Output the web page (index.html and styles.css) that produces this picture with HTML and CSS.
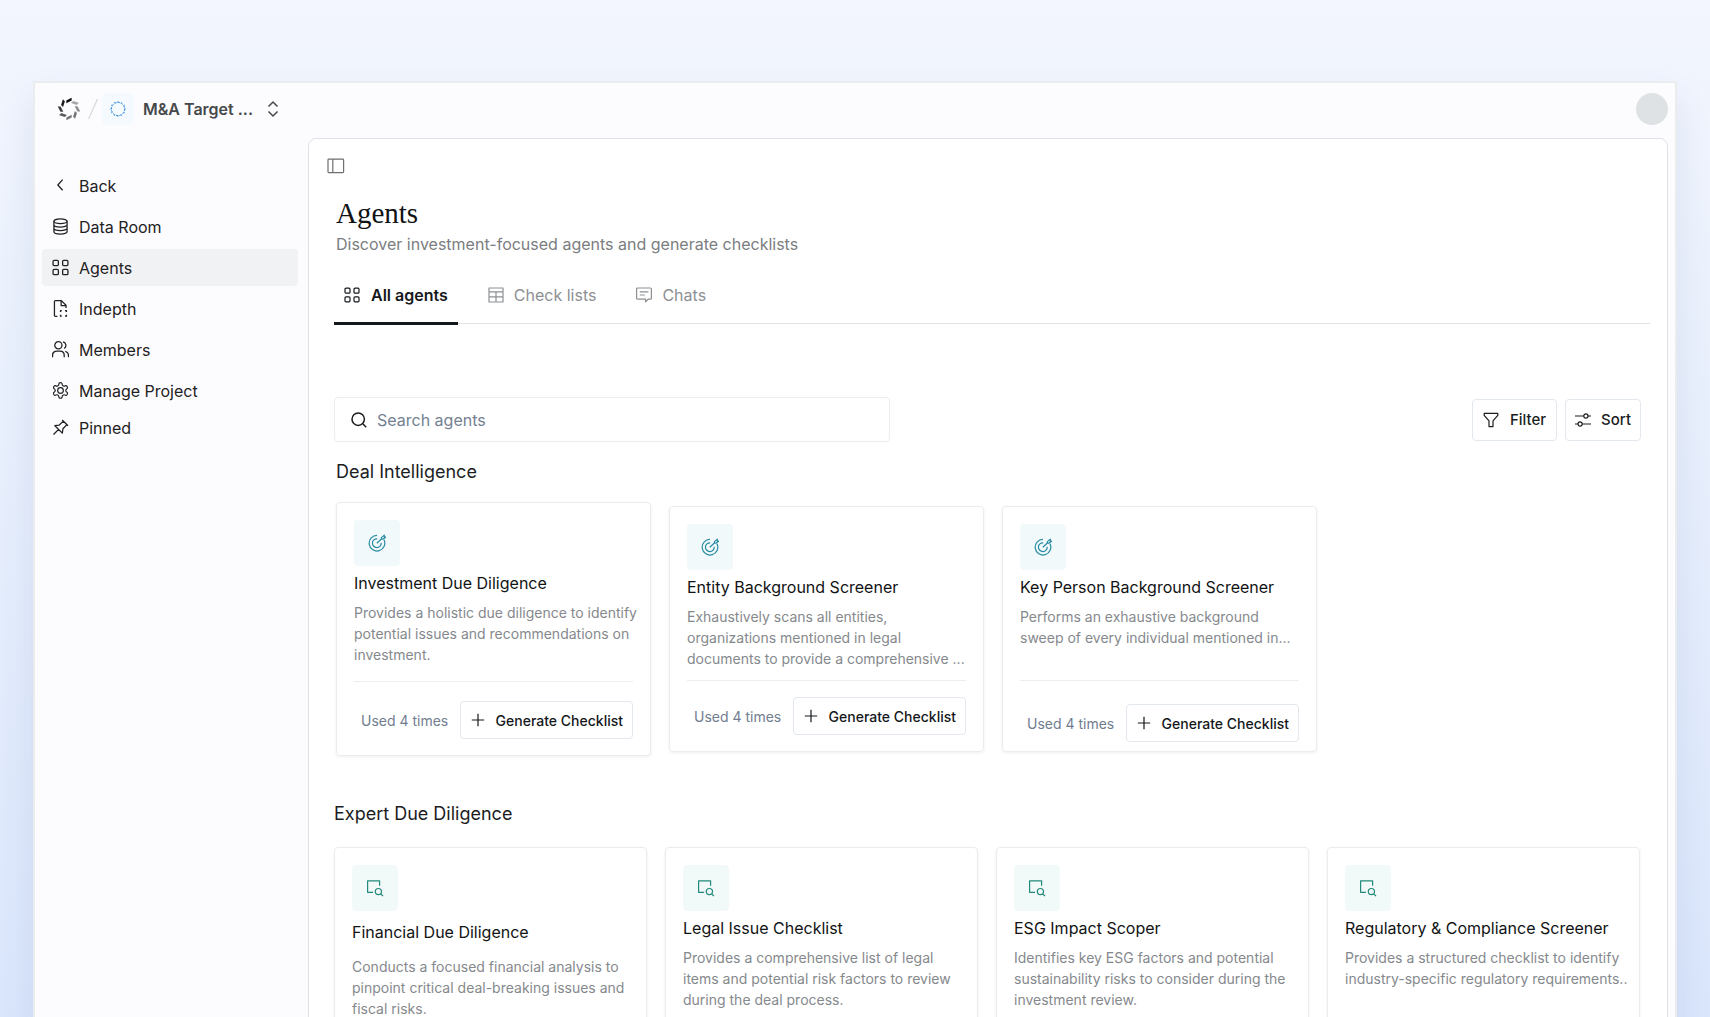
FILE: index.html
```html
<!DOCTYPE html>
<html lang="en">
<head>
    <meta charset="UTF-8">
    <meta name="viewport" content="width=device-width, initial-scale=1.0">
    <title>Agents</title>
    <link rel="stylesheet" href="styles.css">
</head>
<body>
    <!-- shared icons -->
    <svg class="sprite" aria-hidden="true">
        <symbol id="i-grid" viewBox="0 0 16 16"><rect x="1" y="1.2" width="5" height="5" rx="1"/><rect x="10" y="1.2" width="5" height="5" rx="1"/><rect x="1" y="9.8" width="5" height="5" rx="1"/><rect x="10" y="9.8" width="5" height="5" rx="1"/></symbol>
        <symbol id="i-target" viewBox="0 0 18 18"><path d="M9 1.400a7.800 7.800 0 1 0 7 4.400"/><path d="M9.200 4.800a4.400 4.400 0 1 0 4 4"/><path d="M8.800 9.300l4.600-4.300V3.600l2.900-2.500v2.100h1.300l-2.700 2h-1.300"/></symbol>
        <symbol id="i-review" viewBox="0 0 18 18"><path d="M7 13.3H1.6V1.8h12v5"/><circle cx="12.4" cy="12.6" r="3.1"/><path d="M14.8 15l2.2 2.2"/></symbol>
        <symbol id="i-plus" viewBox="0 0 14 14"><path d="M7 .8v12.4M.8 7h12.4"/></symbol>
        <symbol id="i-petal" viewBox="0 0 24 24"><path d="M9.300 6.300V3.500L14.600.7v2.900z"/></symbol>
    </svg>

    <div class="window">
        <header class="topbar">
            <svg class="logo" viewBox="0 0 24 24">
                <use href="#i-petal" fill="#0c0d0e"/>
                <use href="#i-petal" fill="#a5a7a9" transform="rotate(45 12 12)"/>
                <use href="#i-petal" fill="#8b8d90" transform="rotate(90 12 12)"/>
                <use href="#i-petal" fill="#717376" transform="rotate(135 12 12)"/>
                <use href="#i-petal" fill="#737578" transform="rotate(180 12 12)"/>
                <use href="#i-petal" fill="#5b5d60" transform="rotate(225 12 12)"/>
                <use href="#i-petal" fill="#3c3e41" transform="rotate(270 12 12)"/>
                <use href="#i-petal" fill="#1c1d1f" transform="rotate(315 12 12)"/>
            </svg>
            <svg class="slash" viewBox="0 0 12 24"><path d="M1.5 22L10.5 2"/></svg>
            <button class="project" type="button">
                <span class="project-icon">
                    <svg viewBox="0 0 16 16"><circle cx="8" cy="8" r="6.6"/><path d="M8 .2v1.600M11.900 1.200l-.8 1.400M14.800 4.100l-1.400.8M15.800 8h-1.600M14.800 11.900l-1.400-.8M11.900 14.800l-.8-1.400M8 15.800v-1.600M4.100 14.800l.8-1.400M1.200 11.900l1.400-.8M.2 8h1.600M1.200 4.100l1.400.8M4.100 1.200l.8 1.400"/></svg>
                </span>
                M&amp;A Target ...
                <svg class="chevrons" viewBox="0 0 12 16"><path d="M1.5 5.5L6 1l4.5 4.5M1.5 10.5L6 15l4.5-4.5"/></svg>
            </button>
            <span class="avatar"></span>
        </header>

        <nav class="sidebar">
            <a class="nav-item" href="#"><svg class="icon" viewBox="0 0 16 16"><path d="M10 2.5L5.5 7.5l4.5 5"/></svg>Back</a>
            <a class="nav-item" href="#"><svg class="icon" viewBox="0 0 16 16"><ellipse cx="8" cy="3" rx="6.2" ry="2.2"/><path d="M1.8 3v10c0 1.2 2.8 2.2 6.2 2.2s6.2-1 6.2-2.2V3M1.8 6.3c0 1.2 2.8 2.2 6.2 2.2s6.2-1 6.2-2.2M1.8 9.7c0 1.2 2.8 2.2 6.2 2.2s6.2-1 6.2-2.2"/></svg>Data Room</a>
            <a class="nav-item active" href="#"><svg class="icon"><use href="#i-grid"/></svg>Agents</a>
            <a class="nav-item" href="#"><svg class="icon" viewBox="0 0 16 16"><path d="M5 15.4H3.2a.9.9 0 0 1-.9-.9v-13a.9.9 0 0 1 .9-.9h5.6l4.4 4.4v2.5M8.6.8v4.4H13"/><path d="M8 11.3V10h1.2M12.2 10h1.4v1.3M8 13.8v1.4h1.2M12.2 15.2h1.4v-1.4"/></svg>Indepth</a>
            <a class="nav-item" href="#"><svg class="icon" viewBox="0 0 16 16"><circle cx="6" cy="4" r="3.4"/><path d="M.5 15.2v-1.6c0-2.4 1.8-4 4-4h3c2.2 0 4 1.6 4 4v1.6M10.3.8a3.4 3.4 0 0 1 1.2 6.2M12.4 9.7c1.9.4 3.1 1.9 3.1 3.9v1.6"/></svg>Members</a>
            <a class="nav-item" href="#"><svg class="icon gear" viewBox="0 0 24 24"><path d="M12.22 1h-.44a2.2 2.2 0 0 0-2.2 2.2v.2a2.2 2.2 0 0 1-1.1 1.9l-.47.27a2.2 2.2 0 0 1-2.2 0l-.17-.09a2.2 2.2 0 0 0-3 .8l-.22.38a2.2 2.2 0 0 0 .8 3l.16.11a2.2 2.2 0 0 1 1.1 1.9v.56a2.2 2.2 0 0 1-1.1 1.9l-.16.1a2.2 2.2 0 0 0-.8 3l.22.4a2.2 2.2 0 0 0 3 .8l.17-.1a2.2 2.2 0 0 1 2.2 0l.47.28a2.2 2.2 0 0 1 1.1 1.9v.2a2.2 2.2 0 0 0 2.2 2.2h.44a2.2 2.2 0 0 0 2.2-2.2v-.2a2.2 2.2 0 0 1 1.1-1.9l.47-.28a2.2 2.2 0 0 1 2.2 0l.17.1a2.2 2.2 0 0 0 3-.8l.22-.4a2.2 2.2 0 0 0-.8-3l-.16-.1a2.2 2.2 0 0 1-1.1-1.9v-.56a2.2 2.2 0 0 1 1.1-1.9l.16-.11a2.2 2.2 0 0 0 .8-3l-.22-.38a2.2 2.2 0 0 0-3-.8l-.17.09a2.2 2.2 0 0 1-2.2 0l-.47-.27a2.2 2.2 0 0 1-1.1-1.9v-.2a2.2 2.2 0 0 0-2.2-2.2z"/><circle cx="12" cy="12" r="4"/></svg>Manage Project</a>
            <a class="nav-item pinned" href="#"><svg class="icon" viewBox="0 0 16 16"><path d="M9.600.9l5.500 5.500M10.700 2L6.800 5.700 2.700 6.300l7 7 .6-4.100L14 5.300M6.200 9.800l-4.800 4.800"/></svg>Pinned</a>
        </nav>

        <main class="panel">
            <button class="toggle" type="button" aria-label="Toggle sidebar">
                <svg viewBox="0 0 18 16"><rect x="1" y="1.2" width="15.6" height="13.4" rx=".8"/><path d="M5.8 1.2v13.4"/></svg>
            </button>
            <h1>Agents</h1>
            <p class="subtitle">Discover investment-focused agents and generate checklists</p>

            <div class="tabs">
                <button class="tab active" type="button"><svg class="icon"><use href="#i-grid"/></svg>All agents</button>
                <button class="tab" type="button"><svg class="icon" viewBox="0 0 16 16"><path d="M1 1h14v14H1zM1 4.8h14M1 9.9h14M8 4.8V15"/></svg>Check lists</button>
                <button class="tab" type="button"><svg class="icon" viewBox="0 0 16 16"><path d="M9.500 14.800v-2.600H1.600a1 1 0 0 1-1-1V2a1 1 0 0 1 1-1h12.800a1 1 0 0 1 1 1v9.200a1 1 0 0 1-1 1h-2.200zM3.800 4.800h8.600M3.800 8h5"/></svg>Chats</button>
            </div>

            <div class="toolbar">
                <label class="search">
                    <svg viewBox="0 0 16 16"><circle cx="7.2" cy="7.2" r="6.2"/><path d="M11.8 11.8l3.4 3.4"/></svg>
                    <input type="text" placeholder="Search agents" aria-label="Search agents">
                </label>
                <button class="btn filter" type="button"><svg class="icon" viewBox="0 0 16 16"><path d="M1.2 1.4h13.600v2L10 8.800v5.800H6V8.800L1.200 3.400z"/></svg>Filter</button>
                <button class="btn" type="button"><svg class="icon" viewBox="0 0 16 16"><path d="M0 4h8.800M13 4h3M0 12h3M7.200 12H16"/><circle cx="10.900" cy="4" r="2.100"/><circle cx="5.100" cy="12" r="2.100"/></svg>Sort</button>
            </div>

            <section>
                <h2>Deal Intelligence</h2>
                <div class="cards deal">
                    <article class="card roomy">
                        <span class="tile"><svg><use href="#i-target"/></svg></span>
                        <h3>Investment Due Diligence</h3>
                        <p>Provides a holistic due diligence to identify potential issues and recommendations on investment.</p>
                        <footer>
                            <span>Used 4 times</span>
                            <button class="generate" type="button"><svg><use href="#i-plus"/></svg>Generate Checklist</button>
                        </footer>
                    </article>
                    <article class="card">
                        <span class="tile"><svg><use href="#i-target"/></svg></span>
                        <h3>Entity Background Screener</h3>
                        <p>Exhaustively scans all entities, organizations mentioned in legal documents to provide a comprehensive ...</p>
                        <footer>
                            <span>Used 4 times</span>
                            <button class="generate" type="button"><svg><use href="#i-plus"/></svg>Generate Checklist</button>
                        </footer>
                    </article>
                    <article class="card low">
                        <span class="tile"><svg><use href="#i-target"/></svg></span>
                        <h3>Key Person Background Screener</h3>
                        <p>Performs an exhaustive background sweep of every individual mentioned in...</p>
                        <footer>
                            <span>Used 4 times</span>
                            <button class="generate" type="button"><svg><use href="#i-plus"/></svg>Generate Checklist</button>
                        </footer>
                    </article>
                </div>
            </section>

            <section class="expert-section">
                <h2>Expert Due Diligence</h2>
                <div class="cards expert">
                    <article class="card spaced">
                        <span class="tile green"><svg><use href="#i-review"/></svg></span>
                        <h3>Financial Due Diligence</h3>
                        <p>Conducts a focused financial analysis to pinpoint critical deal-breaking issues and fiscal risks.</p>
                    </article>
                    <article class="card">
                        <span class="tile green"><svg><use href="#i-review"/></svg></span>
                        <h3>Legal Issue Checklist</h3>
                        <p>Provides a comprehensive list of legal items and potential risk factors to review during the deal process.</p>
                    </article>
                    <article class="card">
                        <span class="tile green"><svg><use href="#i-review"/></svg></span>
                        <h3>ESG Impact Scoper</h3>
                        <p>Identifies key ESG factors and potential sustainability risks to consider during the investment review.</p>
                    </article>
                    <article class="card">
                        <span class="tile green"><svg><use href="#i-review"/></svg></span>
                        <h3>Regulatory &amp; Compliance Screener</h3>
                        <p>Provides a structured checklist to identify industry-specific regulatory requirements..</p>
                    </article>
                </div>
            </section>
        </main>
    </div>
</body>
</html>
```

FILE: styles.css
```css
* {
    margin: 0;
    padding: 0;
    box-sizing: border-box;
}

body {
    font-family: Inter, "Liberation Sans", sans-serif;
    font-size: 16px;
    color: #1b1d1f;
    height: 100vh;
    overflow: hidden;
    padding: 81px 33px 0;
    background: linear-gradient(180deg, #f3f6fe 0%, #ecf2fd 25%, #dae6fc 100%);
}

button, input {
    font: inherit;
    color: inherit;
    background: none;
    border: none;
}

svg {
    display: block;
    flex: none;
    fill: none;
    stroke: currentColor;
    stroke-width: 1.2;
    stroke-linejoin: round;
}

.sprite {
    position: absolute;
    width: 0;
    height: 0;
}

.icon {
    width: 16px;
    height: 16px;
}

.window {
    display: grid;
    grid-template-columns: 273px 1fr;
    grid-template-rows: 55px auto;
    padding-right: 7px;
    border: 2px solid #ebecee;
    background: #fcfcfe;
    box-shadow: 0 16px 32px rgba(60, 80, 130, 0.1);
}

/* top bar */
.topbar {
    grid-column: 1 / 3;
    display: flex;
    align-items: center;
    padding: 0 0 4px 22px;
}

.logo {
    width: 24px;
    height: 24px;
    stroke: none;
}

.logo use {
    width: 24px;
    height: 24px;
}

.slash {
    width: 12px;
    height: 24px;
    margin: 0 3px 0 6px;
    color: #d6d8dc;
}

.project {
    display: flex;
    align-items: center;
    font-weight: 600;
    color: #46484b;
}

.project-icon {
    display: flex;
    align-items: center;
    justify-content: center;
    width: 32px;
    height: 32px;
    margin-right: 9px;
    border-radius: 4px;
    background: #f5fafe;
}

.project-icon svg {
    width: 16px;
    height: 16px;
    color: #3f8fdc;
    stroke-width: 1;
}

.project-icon circle {
    stroke-dasharray: 2 1.45;
}

.chevrons {
    width: 12px;
    height: 16px;
    margin-left: 14px;
    stroke-width: 1.5;
}

.avatar {
    width: 32px;
    height: 32px;
    margin-left: auto;
    border-radius: 50%;
    background: #dee2e4;
}

/* sidebar */
.sidebar {
    display: flex;
    flex-direction: column;
    gap: 4px;
    padding: 29px 10px 0 7px;
}

.nav-item {
    display: flex;
    align-items: center;
    gap: 10px;
    height: 37px;
    padding-left: 10px;
    border-radius: 4px;
    color: #1f2123;
    text-decoration: none;
}

.nav-item .icon {
    width: 17px;
    height: 17px;
}

.nav-item .gear {
    stroke-width: 1.7;
}

.nav-item.active {
    background: #f1f2f4;
}

.nav-item.pinned {
    margin-top: -4px;
}

/* main panel */
.panel {
    padding: 16px 17px 40px 25px;
    border: 1px solid #dfe3e6;
    border-radius: 8px 8px 0 0;
    background: #fff;
}

.toggle {
    display: block;
    margin-left: -7px;
    padding: 3px 0 2px;
    color: #6d6f71;
}

.toggle svg {
    width: 18px;
    height: 16px;
}

h1 {
    margin: 19px 0 0 2px;
    font-family: "Liberation Serif", serif;
    font-size: 29px;
    font-weight: 400;
    line-height: 36px;
    color: #111314;
}

.subtitle {
    margin: 1px 0 0 2px;
    line-height: 24px;
    color: #7b7d7f;
}

.tabs {
    display: flex;
    gap: 20px;
    margin-top: 12px;
    border-bottom: 1px solid #dfe3e6;
}

.tab {
    display: flex;
    align-items: center;
    gap: 10px;
    height: 57px;
    margin-bottom: -2px;
    padding: 0 10px;
    border-bottom: 3px solid transparent;
    color: #8d9093;
}

.tab.active {
    gap: 11px;
    font-weight: 600;
    color: #15181b;
    border-color: #15181b;
}

.toolbar {
    display: flex;
    align-items: center;
    gap: 8px;
    margin: 73px 9px 0 0;
}

.search {
    display: flex;
    align-items: center;
    gap: 10px;
    flex: 0 1 556px;
    height: 45px;
    margin-right: auto;
    padding: 0 16px;
    border: 1px solid #eaedf0;
    border-radius: 4px;
}

.search svg {
    width: 16px;
    height: 16px;
    stroke-width: 1.5;
}

.search input {
    flex: 1;
    outline: none;
}

.search input::placeholder {
    color: #747f92;
}

.btn {
    display: flex;
    align-items: center;
    gap: 10px;
    height: 42px;
    padding: 0 9px;
    border: 1px solid #e3e8ee;
    border-radius: 4px;
    font-size: 15px;
    font-weight: 500;
}

.btn.filter {
    gap: 11px;
    padding: 0 10px;
}

h2 {
    margin: 17px 0 0 2px;
    font-size: 18px;
    font-weight: 400;
    line-height: 26px;
}

.expert-section {
    margin-top: 45px;
}

.expert-section h2 {
    margin-left: 0;
}

.cards {
    display: grid;
    gap: 18px;
}

.deal {
    grid-template-columns: repeat(3, 315px);
    align-items: center;
    margin: 17px 0 0 2px;
}

.expert {
    grid-template-columns: repeat(4, 1fr);
    margin: 20px 10px 0 0;
}

.card {
    min-height: 246px;
    padding: 17px 17px 16px;
    border: 1px solid #ebeced;
    border-radius: 4px;
    box-shadow: 0 1px 3px rgba(20, 30, 40, 0.07);
}

.tile {
    display: flex;
    align-items: center;
    justify-content: center;
    width: 46px;
    height: 46px;
    border-radius: 4px;
    background: #f1f9fb;
    color: #2a8ba3;
}

.tile.green {
    background: #f1faf9;
    color: #23897a;
}

.tile svg {
    width: 18px;
    height: 18px;
}

h3 {
    margin-top: 5px;
    font-size: 16px;
    font-weight: 400;
    line-height: 24px;
    color: #111314;
}

.card p {
    min-height: 63px;
    margin: 7px -7px 0 0;
    font-size: 14px;
    line-height: 21px;
    color: #85898d;
}

.card footer {
    display: flex;
    align-items: center;
    justify-content: space-between;
    margin-top: 11px;
    padding: 16px 0 0 7px;
    border-top: 1px solid #eceef0;
    font-size: 14px;
    color: #717d8f;
}

.card.roomy footer {
    margin-top: 16px;
    padding-top: 19px;
}

.card.low {
    padding-bottom: 9px;
}

.card.low footer {
    padding-top: 23px;
}

.card.spaced h3 {
    margin-top: 9px;
}

.card.spaced p {
    margin-top: 12px;
}

.generate {
    display: flex;
    align-items: center;
    gap: 11px;
    height: 38px;
    padding: 0 9px 0 10px;
    border: 1px solid #e3e8ee;
    border-radius: 4px;
    font-weight: 500;
    color: #15181b;
}

.generate svg {
    width: 14px;
    height: 14px;
}
```
